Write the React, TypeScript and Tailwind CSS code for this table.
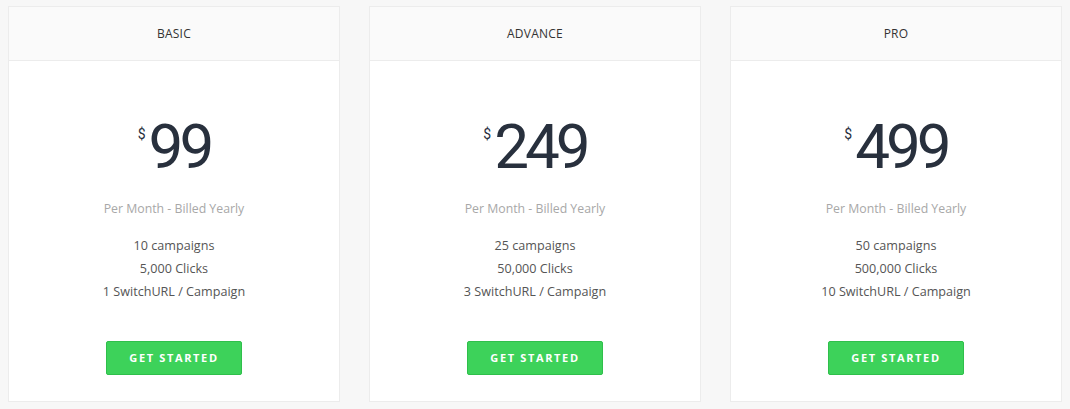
const plans = [
  { name: 'BASIC', price: '99', features: ['10 campaigns', '5,000 Clicks', '1 SwitchURL / Campaign'] },
  { name: 'ADVANCE', price: '249', features: ['25 campaigns', '50,000 Clicks', '3 SwitchURL / Campaign'] },
  { name: 'PRO', price: '499', features: ['50 campaigns', '500,000 Clicks', '10 SwitchURL / Campaign'] },
];

export default function App() {
  return (
    <div className="min-h-[409px] bg-[#f7f7f7] px-2 pt-[6px] font-['Open_Sans',sans-serif]">
      <div className="grid grid-cols-3 gap-[29px] w-[1054px]">
        {plans.map((plan) => (
          <div key={plan.name} className="h-[396px] border border-[#ececec] bg-white flex flex-col">
            <div className="h-[54px] shrink-0 border-b border-[#ececec] bg-[#fafafa] flex items-center justify-center text-[12px] font-medium text-[#333] tracking-[0.02em]">
              {plan.name}
            </div>
            <div className="flex flex-col items-center pt-[55px]">
              <div className="flex items-start text-[#28303d]">
                <span className="mt-[8px] mr-[3px] text-[14px] font-['Roboto',sans-serif]">$</span>
                <span className="text-[62px] leading-[62px] font-['Roboto',sans-serif] tracking-[-4px]">{plan.price}</span>
              </div>
              <p className="mt-[22px] text-[12.3px] text-[#a8a8a8]">Per Month - Billed Yearly</p>
              <ul className="mt-[16px] flex flex-col items-center text-[12.6px] leading-[23px] text-[#555]">
                {plan.features.map((f) => (
                  <li key={f}>{f}</li>
                ))}
              </ul>
              <button className="mt-[38px] w-[136px] h-[34px] rounded-[2px] border border-[#2fbf4b] bg-[#3dd25a] text-white text-[11px] font-bold tracking-[0.15em]">
                GET STARTED
              </button>
            </div>
          </div>
        ))}
      </div>
    </div>
  );
}
